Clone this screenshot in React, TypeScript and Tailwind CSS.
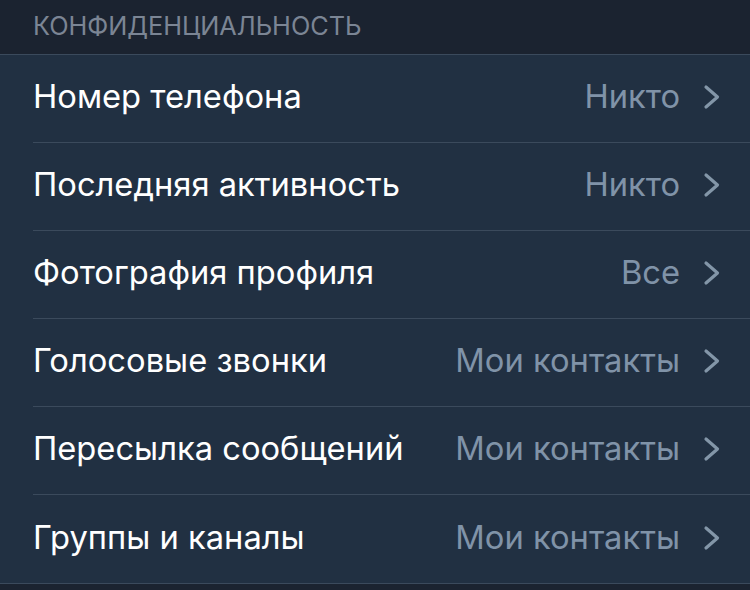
const rows = [
  { label: 'Номер телефона', value: 'Никто' },
  { label: 'Последняя активность', value: 'Никто' },
  { label: 'Фотография профиля', value: 'Все' },
  { label: 'Голосовые звонки', value: 'Мои контакты' },
  { label: 'Пересылка сообщений', value: 'Мои контакты' },
  { label: 'Группы и каналы', value: 'Мои контакты' },
];

const Chevron = () => (
  <svg width="18" height="26" viewBox="0 0 18 26" className="ml-[23px] text-[#8396a8]">
    <polyline
      points="3,3 14.5,13 3,23"
      fill="none"
      stroke="currentColor"
      strokeWidth="3.2"
      strokeLinecap="round"
      strokeLinejoin="round"
    />
  </svg>
);

const App = () => {
  return (
    <div className="w-[750px] h-[590px] bg-[#1b2330] font-['Inter','Roboto',sans-serif] overflow-hidden">
      <div className="h-[54px] flex items-center pl-[33px] pb-[2px] text-[25.3px] text-[#7b8594]">
        КОНФИДЕНЦИАЛЬНОСТЬ
      </div>
      <div className="bg-[#213042] border-y border-[#3b4a5c]">
        {rows.map((row, i) => (
          <div key={row.label} className="pl-[33px]">
            <div
              className={
                'h-[88px] flex items-center pr-[29px] pb-[3px] ' +
                (i < rows.length - 1 ? 'border-b border-[#3b4a5c]' : '')
              }
            >
              <span className="text-[32.7px] text-white flex-1">{row.label}</span>
              <span className="text-[32.7px] text-[#8093a8]">{row.value}</span>
              <Chevron />
            </div>
          </div>
        ))}
      </div>
    </div>
  );
};

export default App;
